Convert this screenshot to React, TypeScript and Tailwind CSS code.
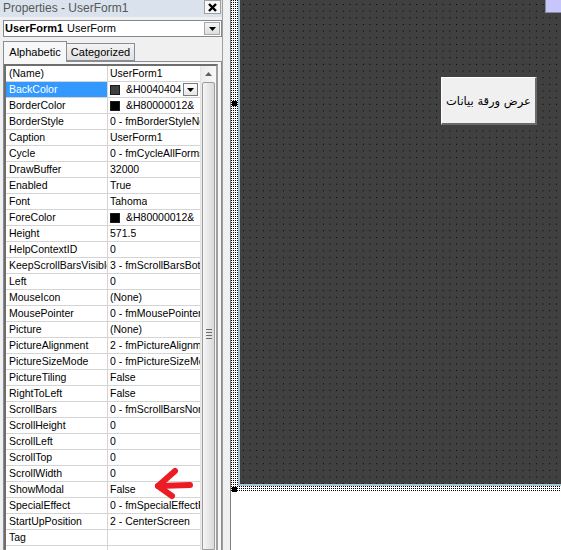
import React from "react";

type Row = { name: string; value: string; swatch?: string; selected?: boolean; drop?: boolean };

const rows: Row[] = [
  { name: "(Name)", value: "UserForm1" },
  { name: "BackColor", value: "&H0040404", swatch: "#404040", selected: true, drop: true },
  { name: "BorderColor", value: "&H80000012&", swatch: "#000000" },
  { name: "BorderStyle", value: "0 - fmBorderStyleNone" },
  { name: "Caption", value: "UserForm1" },
  { name: "Cycle", value: "0 - fmCycleAllForms" },
  { name: "DrawBuffer", value: "32000" },
  { name: "Enabled", value: "True" },
  { name: "Font", value: "Tahoma" },
  { name: "ForeColor", value: "&H80000012&", swatch: "#000000" },
  { name: "Height", value: "571.5" },
  { name: "HelpContextID", value: "0" },
  { name: "KeepScrollBarsVisible", value: "3 - fmScrollBarsBoth" },
  { name: "Left", value: "0" },
  { name: "MouseIcon", value: "(None)" },
  { name: "MousePointer", value: "0 - fmMousePointerDefault" },
  { name: "Picture", value: "(None)" },
  { name: "PictureAlignment", value: "2 - fmPictureAlignmentCenter" },
  { name: "PictureSizeMode", value: "0 - fmPictureSizeModeClip" },
  { name: "PictureTiling", value: "False" },
  { name: "RightToLeft", value: "False" },
  { name: "ScrollBars", value: "0 - fmScrollBarsNone" },
  { name: "ScrollHeight", value: "0" },
  { name: "ScrollLeft", value: "0" },
  { name: "ScrollTop", value: "0" },
  { name: "ScrollWidth", value: "0" },
  { name: "ShowModal", value: "False" },
  { name: "SpecialEffect", value: "0 - fmSpecialEffectFlat" },
  { name: "StartUpPosition", value: "2 - CenterScreen" },
  { name: "Tag", value: "" },
  { name: "", value: "" },
];

function DownTri() {
  return (
    <svg width="7" height="4" viewBox="0 0 7 4">
      <polygon points="0,0 7,0 3.5,4" fill="#000" />
    </svg>
  );
}

function PropRow({ row }: { row: Row }) {
  return (
    <div className="flex h-[16px] w-full shrink-0 border-b border-[#d4d4d4] text-[10.5px] leading-[15px]">
      <div
        className={
          "w-[102px] shrink-0 overflow-hidden whitespace-nowrap border-r border-[#d4d4d4] pl-[3px] " +
          (row.selected ? "bg-[#3399ff] text-white" : "")
        }
      >
        {row.name}
      </div>
      <div className="flex min-w-0 flex-1 items-center overflow-hidden whitespace-nowrap pl-[2px]">
        {row.swatch && (
          <span
            className="mr-[6px] h-[10px] w-[10px] shrink-0 border border-[#1a1a1a]"
            style={{ backgroundColor: row.swatch }}
          />
        )}
        <span className="min-w-0 overflow-hidden">{row.value}</span>
        {row.drop && (
          <span className="ml-auto mr-[2px] flex h-[13px] w-[15px] shrink-0 items-center justify-center border border-[#7a7a7a] bg-gradient-to-b from-[#fdfdfd] to-[#e6e6e6]">
            <DownTri />
          </span>
        )}
      </div>
    </div>
  );
}

const dots =
  "[background-image:conic-gradient(from_90deg_at_1px_1px,transparent_180deg,#000_180deg_270deg,transparent_270deg)]";

export default function App() {
  return (
    <div className="flex h-[550px] w-[561px] overflow-hidden bg-white font-['Liberation_Sans',Arial,sans-serif] text-black">
      {/* properties window */}
      <div className="relative flex w-[222px] shrink-0 flex-col overflow-hidden bg-[#f0f0f0]">
        <div className="flex h-[17px] shrink-0 items-start justify-between bg-[#dae3ed] pl-[3px] pr-[1px]">
          <span className="pt-[1px] text-[12px] leading-[15px] text-[#575757]">Properties - UserForm1</span>
          <span className="flex h-[14px] w-[17px] items-center justify-center border border-[#a0a0a0] bg-[#f8f8f8]">
            <svg width="9" height="9" viewBox="0 0 9 9">
              <path d="M1 1L8 8M8 1L1 8" stroke="#000" strokeWidth="2.4" />
            </svg>
          </span>
        </div>

        <div className="ml-[3px] mt-[3px] flex h-[17px] w-[219px] shrink-0 items-center border border-[#828790] bg-white pl-[1px] text-[11px]">
          <span className="font-bold">UserForm1</span>
          <span className="ml-[4px]">UserForm</span>
          <span className="ml-auto mr-[1px] flex h-[13px] w-[16px] items-center justify-center border border-[#a8a8a8] bg-gradient-to-b from-[#f4f4f4] to-[#dedede]">
            <DownTri />
          </span>
        </div>

        <div className="mt-[4px] flex h-[20px] shrink-0 items-end pl-[3px] text-[11px]">
          <div className="relative z-10 -mb-px flex h-[21px] w-[64px] items-center justify-center border border-b-0 border-[#898c95] bg-[#f7f7f7]">
            Alphabetic
          </div>
          <div className="flex h-[18px] w-[68px] items-center justify-center border border-l-0 border-[#898c95] bg-gradient-to-b from-[#f3f3f3] to-[#e2e2e2]">
            Categorized
          </div>
        </div>

        <div className="ml-[3px] flex min-h-0 w-[219px] flex-1 border-l border-r border-t border-[#898c95] bg-[#f7f7f7] pr-[3px] pt-[2px]">
          <div className="flex min-h-0 min-w-0 flex-1 border-l-2 border-r-2 border-t-2 border-[#6e6e6e] border-r-[#a0a0a0]">
            <div className="flex w-[194px] shrink-0 flex-col overflow-hidden bg-white">
              {rows.map((r, i) => (
                <PropRow key={i} row={r} />
              ))}
            </div>
            <div className="flex w-[16px] shrink-0 flex-col border-l border-[#e3e3e3] bg-gradient-to-r from-[#ececec] to-[#f8f8f8]">
              <div className="flex h-[16px] shrink-0 items-center justify-center">
                <svg width="7" height="4" viewBox="0 0 7 4">
                  <polygon points="3.5,0 7,4 0,4" fill="#606060" />
                </svg>
              </div>
              <div className="mx-[1px] flex flex-1 flex-col items-center rounded-t-[2px] border border-[#9c9c9c] bg-gradient-to-r from-[#f6f6f6] to-[#dadada]">
                <div className="mt-[246px] flex flex-col gap-[2px]">
                  <span className="h-px w-[6px] bg-[#6c6c6c]" />
                  <span className="h-px w-[6px] bg-[#6c6c6c]" />
                  <span className="h-px w-[6px] bg-[#6c6c6c]" />
                  <span className="h-px w-[6px] bg-[#6c6c6c]" />
                </div>
              </div>
            </div>
          </div>
        </div>

        <svg className="absolute left-[150px] top-[463px]" width="45" height="40" viewBox="0 0 45 40">
          <g stroke="#ec1c24" strokeWidth="6" strokeLinecap="round" strokeLinejoin="round" fill="none">
            <path d="M8 23 L40 22" />
            <path d="M25 8 L8 23 L22 33" />
          </g>
        </svg>
      </div>

      {/* splitter */}
      <div className="w-[9px] shrink-0 border-l border-r border-[#a0a0a0] border-r-[#808080] bg-[#f0f0f0]" />

      {/* form designer */}
      <div className="relative flex min-w-0 flex-1 flex-col bg-white">
        <div className="flex h-[486px] shrink-0">
          <div className={"w-[7px] shrink-0 bg-white [background-size:2px_2px] " + dots}>
            <div className="ml-[1px] mt-[101px] h-[5px] w-[5px] bg-black" />
          </div>
          <div
            className={
              "relative flex-1 border-b-2 border-l-2 border-[#a3c8d8] bg-[#404040] [background-position:3px_4px] [background-size:6.67px_6.67px] " +
              dots
            }
          >
            <div className="absolute left-[201px] top-[77px] flex h-[48px] w-[96px] items-center justify-center border-l border-t border-white border-b-[#6a6a6a] border-r-[#6a6a6a] border-b-2 border-r-2 bg-[#f0f0f0] font-['DejaVu_Sans',sans-serif] text-[11.5px]">
              <span dir="rtl" className="mt-[3px]">عرض ورقة بيانات</span>
            </div>
          </div>
        </div>
        <div className={"h-[6px] shrink-0 bg-white [background-size:2px_2px] " + dots}>
          <div className="ml-[1px] mt-[1px] h-[5px] w-[5px] bg-black" />
        </div>
        <div className="absolute right-0 top-0 h-[13px] w-[16px] border-b border-l border-[#8a8aa8] bg-[#c6c6fa]" />
      </div>
    </div>
  );
}
